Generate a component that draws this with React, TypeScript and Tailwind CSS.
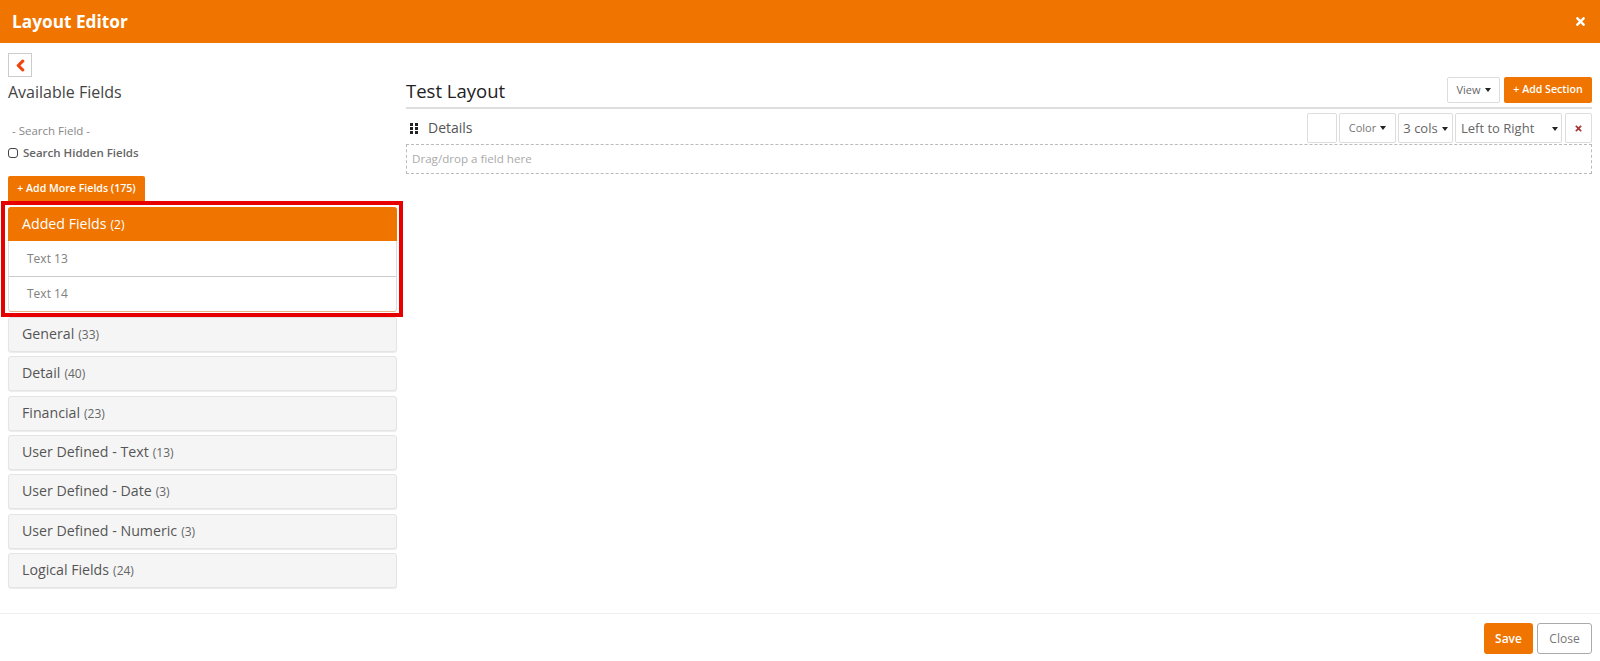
import { FaChevronLeft, FaTimes } from 'react-icons/fa'

const groups = [
  { name: 'General', count: 33 },
  { name: 'Detail', count: 40 },
  { name: 'Financial', count: 23 },
  { name: 'User Defined - Text', count: 13 },
  { name: 'User Defined - Date', count: 3 },
  { name: 'User Defined - Numeric', count: 3 },
  { name: 'Logical Fields', count: 24 },
]

function Caret() {
  return (
    <span className="inline-block w-0 h-0 border-x-[3.5px] border-x-transparent border-t-[4px] border-t-[#222]" />
  )
}

function GripIcon() {
  return (
    <svg width="8" height="11" viewBox="0 0 8 11" className="text-[#222]" fill="currentColor">
      <rect x="0" y="0" width="3" height="3" />
      <rect x="5" y="0" width="3" height="3" />
      <rect x="0" y="4" width="3" height="3" />
      <rect x="5" y="4" width="3" height="3" />
      <rect x="0" y="8" width="3" height="3" />
      <rect x="5" y="8" width="3" height="3" />
    </svg>
  )
}

export default function App() {
  return (
    <div className="h-[661px] flex flex-col bg-white overflow-hidden font-['Open_Sans',sans-serif] text-[#555]">
      {/* modal header */}
      <div className="h-[43px] shrink-0 flex items-center justify-between bg-[#ef7500] pl-3 pr-[13px]">
        <h1 className="text-[17.25px] font-bold text-white">Layout Editor</h1>
        <FaTimes size={13} className="text-white" />
      </div>

      <div className="flex-1 flex min-h-0 pt-[10px] pl-2 pr-2">
        {/* left column */}
        <div className="w-[389px] shrink-0 mr-[9px]">
          <button className="w-6 h-6 flex items-center justify-center border border-[#ccc] text-[#f0420a]">
            <FaChevronLeft size={13} className="stroke-current stroke-[40]" />
          </button>
          <h2 className="mt-[3px] text-[16px] leading-[24px] text-[#444]">Available Fields</h2>
          <div className="mt-[18px] pl-1 text-[11.5px] leading-[18px] text-[#888]">- Search Field -</div>
          <label className="mt-[4px] flex items-center gap-[5px] text-[11.5px] leading-[18px] font-semibold text-[#666]">
            <span className="w-[10px] h-[10px] rounded-[3px] border-[1.5px] border-[#444]" />
            Search Hidden Fields
          </label>
          <button className="mt-[14px] block h-[25px] w-[137px] rounded-t-[2px] bg-[#ef7500] text-[10.6px] font-semibold text-white">
            + Add More Fields (175)
          </button>

          <div className="relative mt-[6px] mb-[5px] rounded-[3px] border border-[#ddd] border-b-[#e8b48a] h-[105px] flex flex-col overflow-visible">
            <div className="h-[34px] shrink-0 -mt-px -mx-px flex items-baseline pl-[14px] pt-[6px] bg-[#ef7500] text-[14.2px] text-white rounded-t-[3px]">
              Added Fields<span className="ml-1 text-[12px]">(2)</span>
            </div>
            <div className="flex-1 flex items-center pl-[18px] pt-px text-[12px] text-[#808080] border-b border-[#ccc]">Text 13</div>
            <div className="flex-1 flex items-center pl-[18px] text-[12px] text-[#808080]">Text 14</div>
            <div className="absolute top-[-7px] bottom-[-6px] left-[-8px] right-[-7px] border-4 border-[#e60000] pointer-events-none" />
          </div>

          <div className="flex flex-col gap-[4.33px]">
            {groups.map((g) => (
              <div
                key={g.name}
                className="h-[35px] flex items-baseline pl-[13px] pt-[5px] bg-[#f5f5f5] border border-[#e4e4e4] rounded-[3px] text-[14.2px] text-[#555] shadow-[0_1px_1px_rgba(0,0,0,0.08)]"
              >
                {g.name}
                <span className="ml-1 text-[12px] text-[#666]">({g.count})</span>
              </div>
            ))}
          </div>
        </div>

        {/* right column */}
        <div className="flex-1 min-w-0 pt-[25px]">
          <div className="h-[31px] flex items-start justify-between border-b-2 border-[#ddd]">
            <h2 className="text-[18.5px] leading-[26px] font-medium text-[#222]">Test Layout</h2>
            <div className="flex gap-1 -mt-px">
              <button className="w-[53px] h-[26px] flex items-center justify-center gap-1 bg-white border border-[#ddd] rounded-[2px] text-[11px] text-[#666]">
                View <Caret />
              </button>
              <button className="w-[88px] h-[26px] bg-[#ef7500] rounded-[2px] text-[10.6px] font-semibold text-white">
                + Add Section
              </button>
            </div>
          </div>

          <div className="mt-[4px] h-[30px] flex items-center">
            <span className="ml-1 flex"><GripIcon /></span>
            <span className="ml-[10px] pb-px text-[14px] text-[#555]">Details</span>
            <div className="ml-auto flex gap-[2px] h-[30px]">
              <span className="w-[30px] bg-white border border-[#ddd] rounded-[2px]" />
              <button className="w-[57px] flex items-center justify-center gap-1 border border-[#ddd] rounded-[2px] text-[11px] text-[#777]">
                Color <Caret />
              </button>
              <button className="w-[55px] pt-px flex items-center justify-center gap-1 border border-[#ddd] rounded-[2px] text-[13px] text-[#666]">
                3 cols <Caret />
              </button>
              <button className="w-[107px] pt-px flex items-center justify-between pl-[5px] pr-[3px] border border-[#ddd] rounded-[2px] text-[13px] text-[#666]">
                Left to Right <Caret />
              </button>
              <button className="ml-[1px] w-[27px] flex items-center justify-center border border-[#ddd] rounded-[2px] text-[#a33]">
                <FaTimes size={9} />
              </button>
            </div>
          </div>

          <div className="mt-[1px] h-[30px] flex items-center pl-[5px] border border-dashed border-[#bbb] text-[11.6px] text-[#aaa]">
            Drag/drop a field here
          </div>
        </div>
      </div>

      {/* footer */}
      <div className="h-[48px] shrink-0 border-t border-[#eee] flex items-start justify-end gap-1 pt-[9px] pr-2">
        <button className="w-[49px] h-[31px] bg-[#ef7500] rounded-[3px] text-[12px] font-semibold text-white">Save</button>
        <button className="w-[55px] h-[31px] border border-[#aaa] rounded-[3px] text-[12px] text-[#777]">Close</button>
      </div>
    </div>
  )
}
